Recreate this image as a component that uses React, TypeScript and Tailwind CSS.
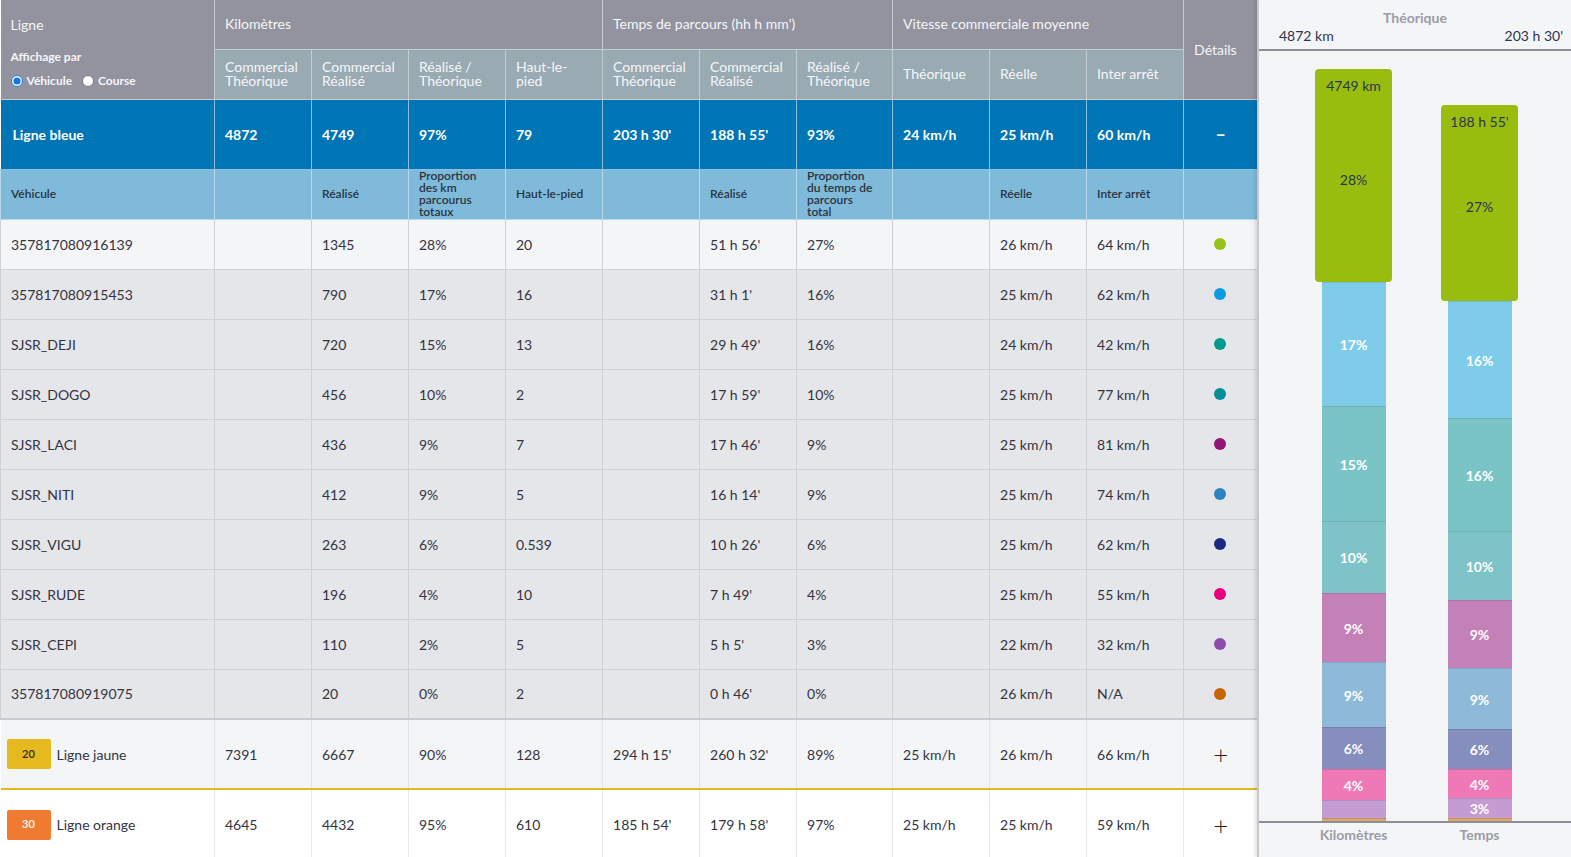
import React from 'react';

type Row = {
  name: string;
  km: string;
  kmPct: string;
  hlp: string;
  time: string;
  timePct: string;
  real: string;
  inter: string;
  dot: string;
};

const ROWS: Row[] = [
  { name: '357817080916139', km: '1345', kmPct: '28%', hlp: '20', time: "51 h 56'", timePct: '27%', real: '26 km/h', inter: '64 km/h', dot: '#98c21e' },
  { name: '357817080915453', km: '790', kmPct: '17%', hlp: '16', time: "31 h 1'", timePct: '16%', real: '25 km/h', inter: '62 km/h', dot: '#0a9be0' },
  { name: 'SJSR_DEJI', km: '720', kmPct: '15%', hlp: '13', time: "29 h 49'", timePct: '16%', real: '24 km/h', inter: '42 km/h', dot: '#009a90' },
  { name: 'SJSR_DOGO', km: '456', kmPct: '10%', hlp: '2', time: "17 h 59'", timePct: '10%', real: '25 km/h', inter: '77 km/h', dot: '#008f94' },
  { name: 'SJSR_LACI', km: '436', kmPct: '9%', hlp: '7', time: "17 h 46'", timePct: '9%', real: '25 km/h', inter: '81 km/h', dot: '#8f1778' },
  { name: 'SJSR_NITI', km: '412', kmPct: '9%', hlp: '5', time: "16 h 14'", timePct: '9%', real: '25 km/h', inter: '74 km/h', dot: '#2b83c0' },
  { name: 'SJSR_VIGU', km: '263', kmPct: '6%', hlp: '0.539', time: "10 h 26'", timePct: '6%', real: '25 km/h', inter: '62 km/h', dot: '#1b2a80' },
  { name: 'SJSR_RUDE', km: '196', kmPct: '4%', hlp: '10', time: "7 h 49'", timePct: '4%', real: '25 km/h', inter: '55 km/h', dot: '#e6007e' },
  { name: 'SJSR_CEPI', km: '110', kmPct: '2%', hlp: '5', time: "5 h 5'", timePct: '3%', real: '22 km/h', inter: '32 km/h', dot: '#8e4aad' },
  { name: '357817080919075', km: '20', kmPct: '0%', hlp: '2', time: "0 h 46'", timePct: '0%', real: '26 km/h', inter: 'N/A', dot: '#c86400' },
];

type Seg = { h: number; color: string; label?: string };

// segments below the green (selected) block, top first
const KM_SEGS: Seg[] = [
  { h: 124, color: '#7ecbea', label: '17%' },
  { h: 115, color: '#7bc4c6', label: '15%' },
  { h: 72, color: '#7dc3c8', label: '10%' },
  { h: 69, color: '#c381b8', label: '9%' },
  { h: 65, color: '#8eb9d8', label: '9%' },
  { h: 42, color: '#868ebd', label: '6%' },
  { h: 31, color: '#ef79b6', label: '4%' },
  { h: 18, color: '#c49cd3' },
  { h: 3, color: '#dda36b' },
];

const TIME_SEGS: Seg[] = [
  { h: 117, color: '#7ecbea', label: '16%' },
  { h: 113, color: '#7bc4c6', label: '16%' },
  { h: 69, color: '#7dc3c8', label: '10%' },
  { h: 68, color: '#c381b8', label: '9%' },
  { h: 61, color: '#8eb9d8', label: '9%' },
  { h: 40, color: '#868ebd', label: '6%' },
  { h: 29, color: '#ef79b6', label: '4%' },
  { h: 20, color: '#c49cd3', label: '3%' },
  { h: 3, color: '#dda36b' },
];

const Bar = ({ top, greenH, pct, segs }: { top: string; greenH: number; pct: string; segs: Seg[] }) => (
  <div className="w-[77px] flex flex-col items-center">
    <div
      className="w-[77px] rounded-[4px] bg-[#98bd0f] flex flex-col items-center text-[14px] text-[#2d3450]"
      style={{ height: greenH }}
    >
      <span className="mt-[6px]">{top}</span>
      <span className="flex-1 flex items-center -mt-[20px]">{pct}</span>
    </div>
    {segs.map((s, i) => (
      <div
        key={i}
        className="w-[64px] flex items-center justify-center text-[14px] font-bold text-white border-t border-black/10"
        style={{ height: s.h, backgroundColor: s.color }}
      >
        {s.label}
      </div>
    ))}
  </div>
);

const hdr = 'border border-[#c3cad0] px-[10px] text-left font-normal align-middle';

const SUB: React.ReactNode[] = [
  'Véhicule',
  '',
  'Réalisé',
  <>Proportion<br />des km<br />parcourus<br />totaux</>,
  'Haut-le-pied',
  '',
  'Réalisé',
  <>Proportion<br />du temps de<br />parcours<br />total</>,
  '',
  'Réelle',
  'Inter arrêt',
  '',
];

export default function App() {
  return (
    <div className="flex w-[1571px] h-[857px] overflow-hidden bg-white font-['Lato',sans-serif] text-[14px] text-[#33343f]">
      <div className="w-[1257px] shrink-0">
        <table className="w-[1257px] table-fixed border-collapse">
          <colgroup>
            <col className="w-[214px]" />
            <col className="w-[97px]" />
            <col className="w-[97px]" />
            <col className="w-[97px]" />
            <col className="w-[97px]" />
            <col className="w-[97px]" />
            <col className="w-[97px]" />
            <col className="w-[96px]" />
            <col className="w-[97px]" />
            <col className="w-[97px]" />
            <col className="w-[97px]" />
            <col className="w-[74px]" />
          </colgroup>
          <thead className="text-[#f6f6f8]">
            <tr className="h-[49px] bg-[#92939f]">
              <th rowSpan={2} className={`${hdr} border-t-0 border-l-0 align-top`}>
                <div className="pt-[14px] text-[14px]">Ligne</div>
                <div className="mt-[13px] text-[12px] font-bold">Affichage par</div>
                <div className="mt-[6px] flex items-center gap-[4px] text-[12px] font-bold">
                  <input type="radio" name="aff" defaultChecked className="w-[12px] h-[12px] m-0 accent-[#1a73e8]" />
                  <span className="mr-[6px]">Véhicule</span>
                  <input type="radio" name="aff" className="w-[12px] h-[12px] m-0" />
                  <span>Course</span>
                </div>
              </th>
              <th colSpan={4} className={`${hdr} border-t-0 pb-[2px]`}>Kilomètres</th>
              <th colSpan={3} className={`${hdr} border-t-0 pb-[2px]`}>Temps de parcours (hh h mm')</th>
              <th colSpan={3} className={`${hdr} border-t-0 pb-[2px]`}>Vitesse commerciale moyenne</th>
              <th rowSpan={2} className={`${hdr} border-t-0 border-r-0 px-[9px]`}>Détails</th>
            </tr>
            <tr className="h-[50px] bg-[#9aaab3] leading-[14px]">
              <th className={hdr}>Commercial<br />Théorique</th>
              <th className={hdr}>Commercial<br />Réalisé</th>
              <th className={hdr}>Réalisé /<br />Théorique</th>
              <th className={hdr}>Haut-le-<br />pied</th>
              <th className={hdr}>Commercial<br />Théorique</th>
              <th className={hdr}>Commercial<br />Réalisé</th>
              <th className={hdr}>Réalisé /<br />Théorique</th>
              <th className={hdr}>Théorique</th>
              <th className={hdr}>Réelle</th>
              <th className={hdr}>Inter arrêt</th>
            </tr>
          </thead>
          <tbody>
            <tr className="h-[70px] bg-[#0075b5] text-white font-bold">
              {['Ligne bleue', '4872', '4749', '97%', '79', "203 h 30'", "188 h 55'", '93%', '24 km/h', '25 km/h', '60 km/h'].map((v, i) => (
                <td key={i} className={`border border-[#8cc0de] border-l-0 ${i === 0 ? 'pl-[12px]' : 'pl-[10px]'}`}>{v}</td>
              ))}
              <td className="border border-[#8cc0de] border-r-0 text-center text-[18px]">–</td>
            </tr>
            <tr className="h-[50px] bg-[#7fbadb] text-[12px] font-semibold text-[#2b3340] leading-[12px]">
              {SUB.map((v, i) => (
                <td key={i} className="border border-[#b8d8ea] px-[10px]">{v}</td>
              ))}
            </tr>
            {ROWS.map((r, idx) => (
              <tr key={r.name} className={`h-[50px] ${idx === 0 ? 'bg-[#f4f5f7]' : 'bg-[#e5e6e9]'}`}>
                {[r.name, '', r.km, r.kmPct, r.hlp, '', r.time, r.timePct, '', r.real, r.inter].map((v, i) => (
                  <td key={i} className="border border-[#cfd1d6] px-[10px]">{v}</td>
                ))}
                <td className="border border-[#cfd1d6] border-r-0">
                  <div className="w-[12px] h-[12px] rounded-full ml-[30px]" style={{ backgroundColor: r.dot }} />
                </td>
              </tr>
            ))}
            <tr className="h-[70px] bg-[#f4f5f7] border-t-2 border-t-[#c9cacf] border-b-2 border-b-[#e5b91c]">
              <td className="border-r border-[#e2e3e6] pl-[6px]">
                <div className="flex items-center gap-[6px]">
                  <span className="w-[44px] h-[30px] rounded-[2px] bg-[#e6b91e] flex items-center justify-center text-[11px] font-semibold text-[#2b2b2b]">20</span>
                  <span>Ligne jaune</span>
                </div>
              </td>
              {['7391', '6667', '90%', '128', "294 h 15'", "260 h 32'", '89%', '25 km/h', '26 km/h', '66 km/h'].map((v, i) => (
                <td key={i} className="border-r border-[#e2e3e6] px-[10px]">{v}</td>
              ))}
              <td className="text-center text-[26px] font-light leading-none text-[#222]">+</td>
            </tr>
            <tr className="h-[70px] bg-white">
              <td className="border-r border-[#e8e9ec] pl-[6px]">
                <div className="flex items-center gap-[6px]">
                  <span className="w-[44px] h-[30px] rounded-[2px] bg-[#f07b30] flex items-center justify-center text-[11px] font-semibold text-white">30</span>
                  <span>Ligne orange</span>
                </div>
              </td>
              {['4645', '4432', '95%', '610', "185 h 54'", "179 h 58'", '97%', '25 km/h', '25 km/h', '59 km/h'].map((v, i) => (
                <td key={i} className="border-r border-[#e8e9ec] px-[10px]">{v}</td>
              ))}
              <td className="text-center text-[26px] font-light leading-none text-[#222]">+</td>
            </tr>
          </tbody>
        </table>
      </div>

      <div className="w-[314px] h-[857px] bg-[#f4f5f7] border-l-2 border-[#c6c8cd] shadow-[-2px_0_4px_rgba(0,0,0,0.12)] flex flex-col">
        <div className="h-[51px] border-b-2 border-[#8c8e98] flex flex-col">
          <div className="text-center text-[14px] font-bold text-[#9a9ca8] pt-[9px] leading-[18px]">Théorique</div>
          <div className="flex justify-between pl-[20px] pr-[8px] text-[14px] text-[#2d3450] leading-[18px]">
            <span>4872 km</span>
            <span>203 h 30'</span>
          </div>
        </div>
        <div className="h-[770px] flex items-end pl-[56px] gap-[49px]">
          <Bar top="4749 km" greenH={213} pct="28%" segs={KM_SEGS} />
          <Bar top="188 h 55'" greenH={196} pct="27%" segs={TIME_SEGS} />
        </div>
        <div className="border-t-2 border-[#8c8e98] flex pl-[56px] gap-[49px] text-[14px] font-bold text-[#9a9ca8] pt-[1px]">
          <span className="w-[77px] text-center">Kilomètres</span>
          <span className="w-[77px] text-center">Temps</span>
        </div>
      </div>
    </div>
  );
}
